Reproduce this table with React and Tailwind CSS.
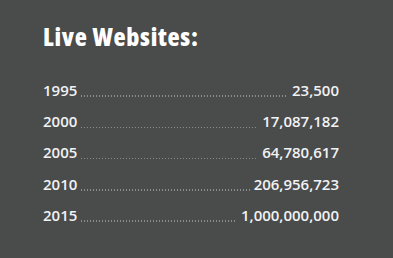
import React from "react";

const rows = [
  ["1995", "23,500"],
  ["2000", "17,087,182"],
  ["2005", "64,780,617"],
  ["2010", "206,956,723"],
  ["2015", "1,000,000,000"],
];

export default function App() {
  return (
    <div
      className="w-[393px] h-[258px] bg-[#4a4b4b] pl-[43px] pt-[20px] text-[#f1f2f4]"
      style={{ fontFamily: '"Open Sans", "Liberation Sans", sans-serif' }}
    >
      <h1 className="text-[25px] font-extrabold leading-[32px] tracking-[0.7px] font-stretch-condensed text-white">
        Live Websites:
      </h1>
      <div className="mt-[26.5px] w-[296px] flex flex-col">
        {rows.map(([y, v]) => (
          <div key={y} className="flex items-end h-[31.25px] pb-[9px] text-[15px] leading-[22px] font-semibold">
            <span>{y}</span>
            <span className="flex-1 mx-[4px] mb-[4px] h-[1.5px] bg-[linear-gradient(to_right,#8c8e8e_1.5px,transparent_1.5px)] bg-[length:3px_1.5px] bg-repeat-x" />
            <span>{v}</span>
          </div>
        ))}
      </div>
    </div>
  );
}
